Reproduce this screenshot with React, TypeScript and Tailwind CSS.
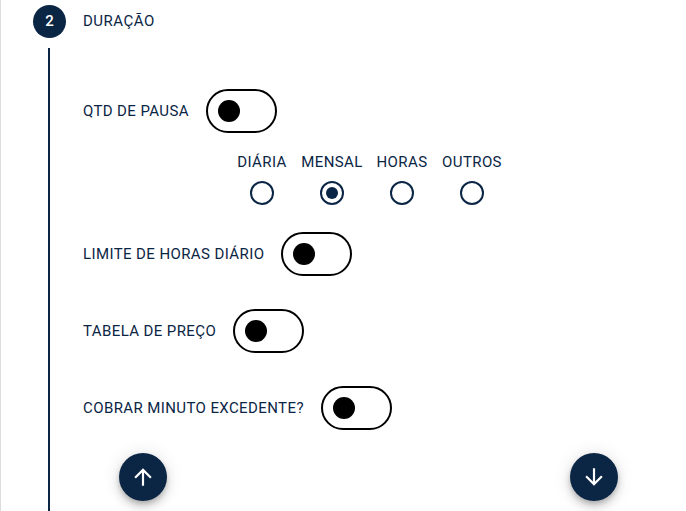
import React from "react"

const navy = "text-[#0b2545]"

function Toggle() {
  return (
    <div className="w-[71px] h-[44px] rounded-full border-2 border-black flex items-center pl-[10px] shrink-0">
      <div className="w-[22px] h-[22px] rounded-full bg-black" />
    </div>
  )
}

function ToggleRow({ label }: { label: string }) {
  return (
    <div className="flex items-center gap-[17px]">
      <span className={`text-[15px] tracking-[0.4px] ${navy}`}>{label}</span>
      <Toggle />
    </div>
  )
}

function Radio({ label, checked }: { label: string; checked?: boolean }) {
  return (
    <div className="w-[70px] flex flex-col items-center">
      <span className={`text-[15px] leading-[20px] tracking-[0.4px] ${navy}`}>{label}</span>
      <div className="mt-[9px] w-[24px] h-[24px] rounded-full border-2 border-[#0b2545] flex items-center justify-center">
        {checked && <div className="w-[12px] h-[12px] rounded-full bg-[#0b2545]" />}
      </div>
    </div>
  )
}

function Fab({ down }: { down?: boolean }) {
  return (
    <button className="w-[48px] h-[48px] rounded-full bg-[#0b2545] flex items-center justify-center shadow-[0_3px_5px_-1px_rgba(0,0,0,0.2),0_6px_10px_0_rgba(0,0,0,0.14),0_1px_18px_0_rgba(0,0,0,0.12)]">
      <svg viewBox="0 0 24 24" className={`w-[26px] h-[26px] fill-white ${down ? "rotate-180" : ""}`}>
        <path d="M4 12l1.41 1.41L11 7.83V20h2V7.83l5.58 5.59L20 12l-8-8-8 8z" />
      </svg>
    </button>
  )
}

export default function App() {
  return (
    <div className="w-[686px] h-[511px] overflow-hidden bg-white border-l border-[#dcdcdc] font-['Roboto',sans-serif]">
      {/* Step header */}
      <div className="flex items-center pl-[32px] pt-[5px]">
        <div className="w-[33px] h-[33px] rounded-full bg-[#0b2545] text-white flex items-center justify-center text-[15px] font-medium">
          2
        </div>
        <span className={`ml-[17px] text-[15px] tracking-[0.5px] ${navy}`}>DURAÇÃO</span>
      </div>

      {/* Step body */}
      <div className="ml-[47px] mt-[10px] h-[500px] border-l-2 border-[#0b2545] pl-[33px] pt-[41px] flex flex-col">
        <ToggleRow label="QTD DE PAUSA" />

        <div className="ml-[144px] mt-[19px] flex">
          <Radio label="DIÁRIA" />
          <Radio label="MENSAL" checked />
          <Radio label="HORAS" />
          <Radio label="OUTROS" />
        </div>

        <div className="mt-[27px] flex flex-col gap-[33px]">
          <ToggleRow label="LIMITE DE HORAS DIÁRIO" />
          <ToggleRow label="TABELA DE PREÇO" />
          <ToggleRow label="COBRAR MINUTO EXCEDENTE?" />
        </div>

        <div className="mt-[23px] flex justify-between pl-[36px] w-[535px]">
          <Fab />
          <Fab down />
        </div>
      </div>
    </div>
  )
}
